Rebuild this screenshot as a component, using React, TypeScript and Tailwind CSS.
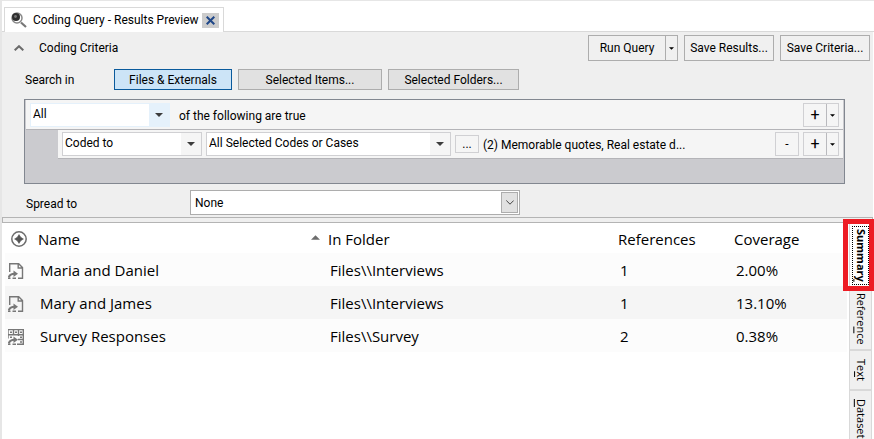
import type { ReactNode } from "react";

const ui = "font-['Roboto','Open_Sans',sans-serif]";
const wide = "font-['Open_Sans','Noto_Sans',sans-serif]";

function Caret({ className = "" }: { className?: string }) {
  return (
    <svg viewBox="0 0 8 4" className={className} fill="currentColor" aria-hidden="true">
      <path d="M0 0h8L4 4z" />
    </svg>
  );
}

function QueryIcon() {
  return (
    <svg viewBox="0 0 16 16" className="size-4 shrink-0" fill="none" aria-hidden="true">
      <circle cx="6" cy="6" r="5" stroke="#8a8a8a" strokeWidth="1.5" />
      <circle cx="5" cy="5" r="4" fill="#2f2f2f" />
      <circle cx="4.5" cy="4.5" r="1.4" fill="#777" />
      <path d="M10 10.500l5 4.500" stroke="#777" strokeWidth="2.200" />
    </svg>
  );
}

function TargetIcon() {
  return (
    <svg viewBox="0 0 16 16" className="size-4" aria-hidden="true">
      <circle cx="8" cy="8" r="7.200" fill="none" stroke="#6d6d6d" strokeWidth="1.500" />
      <path d="M8 3.600l1.700 2.700L12.400 8 9.700 9.700 8 12.400 6.300 9.700 3.600 8l2.700-1.700z" fill="#555" stroke="#555" strokeWidth=".6" />
    </svg>
  );
}

function FileIcon() {
  return (
    <svg viewBox="0 0 16 16" className="size-4" fill="none" stroke="#777" strokeWidth="1.400" aria-hidden="true">
      <path d="M1.700 9V.7h9l3.800 3.800v10.800H10M10.200.7v4.300h4.300" />
      <path d="M.7 14.500C1.500 12 3.500 10.800 6.500 10.800" strokeWidth="2" />
      <path d="M5.500 7.500l4.500 3.300-4.500 3.200z" fill="#777" stroke="none" />
      <path d="M0 15.300h2.500M4.500 15.300H8" />
    </svg>
  );
}

function DatasetIcon() {
  return (
    <svg viewBox="0 0 16 16" className="size-4" fill="none" stroke="#777" aria-hidden="true">
      <path d="M0 .6h16M0 5.700h16M0 .500v9M5.500 1v5M10.500 1v6M15.300.500v15M10 10.500h6M9 15.300h7" strokeWidth="1.400" />
      <path d="M2 3.200h2M7 3.200h2M12 3.200h2M2 8.200h2M12 8.200h2M12 13h2" strokeWidth="1.500" />
      <path d="M.7 14.500C1.500 12 3.500 10.800 6.500 10.800" strokeWidth="2" />
      <path d="M5.500 7.500l4.500 3.300-4.500 3.200z" fill="#777" stroke="none" />
      <path d="M0 15.300h2.500M4.500 15.300H8" strokeWidth="1.400" />
    </svg>
  );
}

function ToolButton({ children, className = "", label }: { children: ReactNode; className?: string; label?: string }) {
  return (
    <button type="button" aria-label={label} className={`h-[26px] border border-[#adadad] bg-[#f0f0f0] ${className}`}>
      {children}
    </button>
  );
}

function ScopeButton({ children, className }: { children: ReactNode; className: string }) {
  return (
    <button type="button" className={`h-[21px] border leading-4 ${className}`}>
      {children}
    </button>
  );
}

function Combo({ label, value, className, tone }: { label: string; value: string; className: string; tone: string }) {
  return (
    <div className={`relative h-6 shrink-0 ${className}`}>
      <select aria-label={label} className="block h-full w-full appearance-none bg-white pb-0.5 pl-0.5 text-black outline-none">
        <option>{value}</option>
      </select>
      <span className={`pointer-events-none absolute inset-y-0 right-0 flex w-5 items-center justify-center text-[#3c3c3c] ${tone}`}>
        <Caret className="h-1 w-2" />
      </span>
    </div>
  );
}

function AddButton() {
  return (
    <div className="flex h-6 w-9 shrink-0 border border-[#d0d0d3] bg-[#f5f5f5]">
      <button type="button" aria-label="Add criterion" className="flex-1 text-base leading-5">+</button>
      <button type="button" aria-label="Add options" className="flex w-3 items-center justify-center border-l border-[#b9b9bd]">
        <Caret className="h-[3px] w-[5px]" />
      </button>
    </div>
  );
}

const rows = [
  { icon: <FileIcon />, name: "Maria and Daniel", folder: "Files\\\\Interviews", refs: "1", coverage: "2.00%" },
  { icon: <FileIcon />, name: "Mary and James", folder: "Files\\\\Interviews", refs: "1", coverage: "13.10%" },
  { icon: <DatasetIcon />, name: "Survey Responses", folder: "Files\\\\Survey", refs: "2", coverage: "0.38%" },
];

function Results() {
  return (
    <table className={`w-full table-fixed border-collapse text-left text-[15px] leading-5 ${wide}`}>
      <colgroup>
        <col className="w-[33px]" />
        <col className="w-[290px]" />
        <col className="w-[290px]" />
        <col className="w-[116px]" />
        <col />
      </colgroup>
      <thead>
        <tr className="h-[30px]">
          <th className="pt-0.5 pl-1.5"><TargetIcon /></th>
          <th className="pt-0.5 font-normal">
            <span className="flex items-center justify-between pr-2">
              Name
              <Caret className="mb-1 h-[5px] w-[9px] rotate-180 text-[#6d6d6d]" />
            </span>
          </th>
          <th className="pt-0.5 font-normal">In Folder</th>
          <th className="pt-0.5 font-normal">References</th>
          <th className="pt-0.5 font-normal">Coverage</th>
        </tr>
      </thead>
      <tbody>
        {rows.map((r) => (
          <tr key={r.name} className="h-[33px] bg-[#fcfcfc] even:bg-[#f5f5f5]">
            <td className="pt-0.5 pl-[3px]">{r.icon}</td>
            <td className="pl-0.5">{r.name}</td>
            <td className="pl-0.5">{r.folder}</td>
            <td className="pl-0.5">{r.refs}</td>
            <td className="pl-0.5">{r.coverage}</td>
          </tr>
        ))}
      </tbody>
    </table>
  );
}

function SideTab({ children, className }: { children: ReactNode; className: string }) {
  return (
    <button
      type="button"
      role="tab"
      className={`flex w-[23px] shrink-0 items-center justify-center border border-[#d9d9d9] [writing-mode:vertical-rl] ${className}`}
    >
      <span>{children}</span>
    </button>
  );
}

export default function App() {
  return (
    <div className={`flex h-screen flex-col overflow-hidden border-t border-l-2 border-[#e6e6e6] bg-white text-xs text-black ${ui}`}>
      <div className="flex h-[31px] shrink-0 items-end border-b border-[#d9d9d9] pl-0.5">
        <div className="-mb-px flex h-[25px] w-[220px] items-center border border-b-0 border-[#d9d9d9] bg-white pl-1.5">
          <QueryIcon />
          <span className="ml-1.5 whitespace-nowrap">Coding Query - Results Preview</span>
          <button type="button" aria-label="Close tab" className="mr-1 ml-auto flex h-[15px] w-[17px] items-center justify-center bg-[#cccccc]">
            <svg viewBox="0 0 9 9" className="size-[9px]" stroke="#1f4788" strokeWidth="2" aria-hidden="true">
              <path d="M.7.7l7.600 7.600M8.300.7L.7 8.300" />
            </svg>
          </button>
        </div>
      </div>

      <section className="mr-px shrink-0 bg-[#efefef] pt-[3px] pb-0.5">
        <div className="flex items-center pr-[3px] pl-3">
          <button type="button" aria-label="Collapse criteria" className="flex h-4 w-[25px] items-center">
            <svg viewBox="0 0 10 6" className="h-1.5 w-2.5" fill="none" stroke="#6b6b6b" strokeWidth="2" aria-hidden="true">
              <path d="M.7 5.300L5 1.200l4.300 4.100" />
            </svg>
          </button>
          <h2 className="flex-1">Coding Criteria</h2>
          <ToolButton className="w-[78px]">Run Query</ToolButton>
          <ToolButton label="Run options" className="-ml-px flex w-[13px] items-center justify-center">
            <Caret className="h-[3px] w-[5px] shrink-0" />
          </ToolButton>
          <ToolButton className="ml-1.5 w-[90px]">Save Results...</ToolButton>
          <ToolButton className="ml-1.5 w-[90px]">Save Criteria...</ToolButton>
        </div>

        <div className="mt-2 flex items-center gap-1.5 pl-[23px]">
          <span className="w-[83px]">Search in</span>
          <ScopeButton className="w-[118px] border-[#0a5a9c] bg-[#cce4f7]">Files &amp; Externals</ScopeButton>
          <ScopeButton className="w-36 border-[#adadad] bg-[#e1e1e1]">Selected Items...</ScopeButton>
          <ScopeButton className="w-[131px] border-[#adadad] bg-[#e1e1e1]">Selected Folders...</ScopeButton>
        </div>

        <div className="mt-[9px] mr-7 ml-[22px] h-[85px] border border-[#828790] bg-[#cbcbcf] px-px">
          <div className="flex h-[30px] items-center border-b border-[#b4b4b8] bg-[#f5f5f5] px-1 pt-px">
            <Combo label="Match" value="All" className="w-[140px] border border-[#e5f1fb]" tone="bg-[#e5f1fb]" />
            <span className="ml-[9px] flex-1 pt-0.5">of the following are true</span>
            <AddButton />
          </div>
          <div className="ml-8 flex h-[29px] items-center border-b border-[#b4b4b8] bg-[#f5f5f5] px-1">
            <Combo label="Condition" value="Coded to" className="w-[140px] border border-[#d0d0d3]" tone="bg-[#f5f5f5]" />
            <Combo label="Codes" value="All Selected Codes or Cases" className="ml-1 w-[245px] border border-[#d0d0d3]" tone="bg-[#f5f5f5]" />
            <button type="button" className="ml-1 h-[18px] w-6 shrink-0 border border-[#d0d0d3] leading-4">...</button>
            <span className="ml-1 flex-1 pt-0.5">(2) Memorable quotes, Real estate d...</span>
            <button type="button" className="mr-1 h-6 w-6 shrink-0 border border-[#d0d0d3]">-</button>
            <AddButton />
          </div>
        </div>

        <div className="mt-1.5 flex items-center pl-6">
          <label htmlFor="spread" className="w-[164px] pt-0.5">Spread to</label>
          <div className="relative h-[25px] w-[330px]">
            <select id="spread" className="block h-full w-full appearance-none border border-[#adadad] bg-white pl-1">
              <option>None</option>
            </select>
            <span className="pointer-events-none absolute inset-y-0.5 right-0.5 flex w-[17px] items-center justify-center border border-[#adadad] bg-[#e1e1e1]">
              <svg viewBox="0 0 8 5" className="h-[5px] w-2" fill="none" stroke="#444" aria-hidden="true">
                <path d="M.3.500L4 4.200 7.700.500" />
              </svg>
            </span>
          </div>
        </div>
      </section>

      <div className="mr-px h-1.5 shrink-0 border border-[#b4b4b4] bg-[#efefef]" />

      <main className="flex min-h-0 flex-1">
        <div className="min-w-0 flex-1 pr-0.5 pl-[3px]"><Results /></div>
        <div role="tablist" aria-orientation="vertical" className={`relative mr-0.5 flex flex-col text-[11px] ${wide}`}>
          <SideTab className="h-[65px] bg-white font-bold outline-1 -outline-offset-4 outline-black outline-dotted">Summar<u>y</u></SideTab>
          <SideTab className="h-[62px] bg-[#f0f0f0]">Refere<u>n</u>ce</SideTab>
          <SideTab className="h-10 bg-[#f0f0f0]">Te<u>x</u>t</SideTab>
          <SideTab className="h-[58px] bg-[#f0f0f0]"><u>D</u>ataset</SideTab>
          <div className="pointer-events-none absolute -top-1 -right-0.5 -left-1.5 h-[72px] border-[5px] border-[#ed1c24]" />
        </div>
      </main>
    </div>
  );
}
